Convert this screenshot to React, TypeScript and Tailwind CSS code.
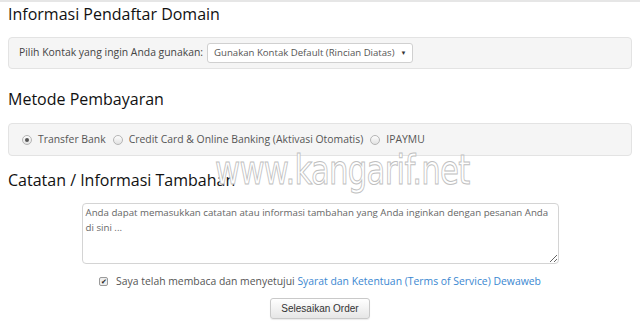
import React from "react";

const font = { fontFamily: '"Open Sans", "Liberation Sans", sans-serif' };

function Radio({ checked }: { checked?: boolean }) {
  return (
    <span className="inline-flex h-[10px] w-[10px] items-center justify-center rounded-full border border-[#b5b5b5] bg-gradient-to-b from-[#fdfdfd] to-[#e2e2e2]">
      {checked && <span className="h-[4px] w-[4px] rounded-full bg-[#555]" />}
    </span>
  );
}

export default function App() {
  return (
    <div className="relative h-[327px] w-[640px] overflow-hidden border-t-2 border-[#e6e6e6] bg-white text-[#333]" style={font}>
      <div className="px-2">
        <h2 className="pt-[1px] text-[16px] leading-[22px] text-[#111]">Informasi Pendaftar Domain</h2>
        <div className="mt-[12px] flex h-[32px] items-center rounded-[4px] border border-[#e3e3e3] bg-[#f5f5f5] pl-[10px] text-[10.4px]">
          <span className="text-[#444]">Pilih Kontak yang ingin Anda gunakan:</span>
          <div className="ml-[4px] flex h-[20px] items-center rounded-[3px] border border-[#d0d0d0] bg-white pl-[6px] pr-[6px] text-[9.6px] text-[#555]">
            Gunakan Kontak Default (Rincian Diatas)
            <span className="ml-[6px] text-[6px] text-[#333]">▼</span>
          </div>
        </div>

        <h2 className="mt-[19px] text-[16px] leading-[22px] text-[#111]">Metode Pembayaran</h2>
        <div className="mt-[13px] flex h-[33px] items-center rounded-[4px] border border-[#e3e3e3] bg-[#f5f5f5] pl-[13px] text-[10.4px] text-[#555]">
          <Radio checked />
          <span className="ml-[6px] mr-[7px]">Transfer Bank</span>
          <Radio />
          <span className="ml-[6px] mr-[7px]">Credit Card &amp; Online Banking (Aktivasi Otomatis)</span>
          <Radio />
          <span className="ml-[6px]">IPAYMU</span>
        </div>

        <h2 className="mt-[13px] text-[16px] leading-[22px] text-[#111]">Catatan / Informasi Tambahan</h2>
        <div className="mt-[12px] flex justify-center">
          <textarea
            className="h-[61px] w-[477px] resize-y rounded-[4px] border border-[#d4d4d4] px-[3px] py-[1px] text-[9.7px] leading-[15px] text-[#555] placeholder:text-[#666] outline-none"
            style={font}
            placeholder="Anda dapat memasukkan catatan atau informasi tambahan yang Anda inginkan dengan pesanan Anda di sini ..."
          />
        </div>

        <div className="mt-[10px] flex items-center justify-center gap-[8px] text-[10.4px] text-[#555]">
          <span className="flex h-[9px] w-[9px] items-center justify-center rounded-[2px] border border-[#9a9a9a] bg-[#eee] text-[7px] leading-none text-[#222]">✔</span>
          <span>
            Saya telah membaca dan menyetujui{" "}
            <span className="text-[#3a87d1]">Syarat dan Ketentuan (Terms of Service) Dewaweb</span>
          </span>
        </div>

        <div className="mt-[8px] flex justify-center">
          <button className="h-[21px] rounded-[3px] border border-[#c9c9c9] bg-gradient-to-b from-white to-[#e6e6e6] px-[10px] text-[10px] text-[#333] shadow-[0_1px_1px_rgba(0,0,0,0.08)]" style={{ fontFamily: '"Liberation Sans", Arial, sans-serif' }}>
            Selesaikan Order
          </button>
        </div>
      </div>

      <div className="pointer-events-none absolute left-[215px] top-[148px] origin-left scale-x-[0.77] text-[40px] leading-none text-white [-webkit-text-stroke:1px_#c0c0c0]" style={{ fontFamily: '"DejaVu Sans", sans-serif', letterSpacing: "-1px" }}>
        www.kangarif.net
      </div>
    </div>
  );
}
